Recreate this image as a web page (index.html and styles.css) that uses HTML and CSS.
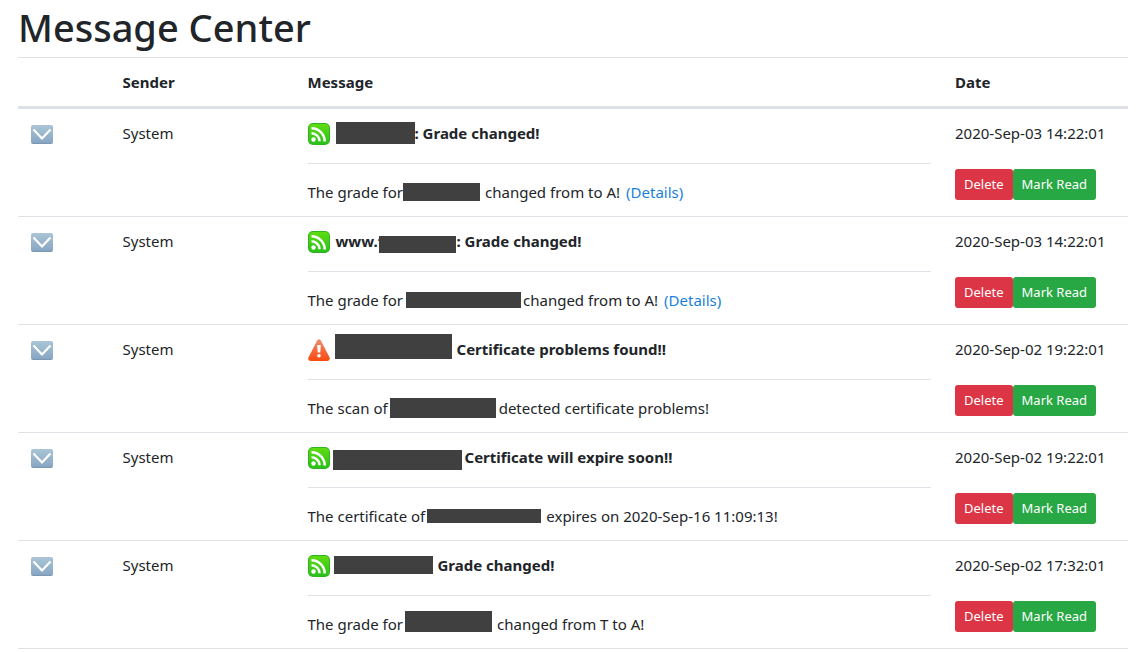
FILE: index.html
```html
<!DOCTYPE html>
<html lang="en">
<head>
  <meta charset="UTF-8" />
  <meta name="viewport" content="width=device-width, initial-scale=1.0" />
  <title>Message Center</title>
  <link rel="stylesheet" href="styles.css">
</head>

<body>
  <!-- shared icons -->
  <svg class="sprite" width="0" height="0" aria-hidden="true">
    <defs>
      <linearGradient id="mailFill" x1="0" y1="0" x2="0" y2="1">
        <stop offset="0" stop-color="#a9c5d6" />
        <stop offset="0.9" stop-color="#8aa8c4" />
        <stop offset="1" stop-color="#7593b2" />
      </linearGradient>
      <linearGradient id="feedFill" x1="0" y1="0" x2="0" y2="1">
        <stop offset="0" stop-color="#5fdc12" />
        <stop offset="1" stop-color="#2bc01c" />
      </linearGradient>
      <linearGradient id="warnFill" x1="0" y1="0" x2="0" y2="1">
        <stop offset="0" stop-color="#f28a6c" />
        <stop offset="1" stop-color="#fb4a10" />
      </linearGradient>
    </defs>
    <symbol id="mail" viewBox="0 0 22 19">
      <rect width="22" height="19" rx="2" fill="url(#mailFill)" />
      <path d="M2.500 4.500L11 13.500L19.500 4.500" fill="none" stroke="#fff" stroke-width="2.200" />
    </symbol>
    <symbol id="feed" viewBox="0 0 22 22">
      <rect width="22" height="22" rx="5" fill="#2fb41f" />
      <rect x="1" y="1" width="20" height="20" rx="4" fill="url(#feedFill)" />
      <circle cx="5.500" cy="16.500" r="2.200" fill="#fff" />
      <path d="M3.500 10.300a8 8 0 0 1 8 8M3.500 5.200a13.200 13.200 0 0 1 13.200 13.200" fill="none" stroke="#fff" stroke-width="2.500" />
    </symbol>
    <symbol id="warn" viewBox="0 0 22 22">
      <path d="M9.200 1.500Q11-1 12.800 1.500L21.600 18.500Q22.500 21.500 19.500 22H2.500Q-.5 21.500.4 18.500z" fill="url(#warnFill)" />
      <path d="M9.200 6h3.600l-.5 7.500h-2.600z" fill="#fff" />
      <circle cx="11" cy="16.700" r="1.800" fill="#fff" />
    </symbol>
  </svg>

  <h1>Message Center</h1>

  <table class="messages">
    <colgroup>
      <col class="col-icon">
      <col class="col-sender">
      <col class="col-message">
      <col class="col-date">
    </colgroup>
    <thead>
      <tr>
        <th></th>
        <th>Sender</th>
        <th>Message</th>
        <th>Date</th>
      </tr>
    </thead>
    <tbody>
      <tr>
        <td><svg class="mail"><use href="#mail" /></svg></td>
        <td>System</td>
        <td>
          <div class="subject"><svg class="icon"><use href="#feed" /></svg><span class="redacted site-1"></span>: Grade changed!</div>
          <hr>
          <div class="text">The grade for<span class="redacted host-1"></span>changed from to A!<a href="#">(Details)</a></div>
        </td>
        <td>
          <div class="date">2020-Sep-03 14:22:01</div>
          <div class="actions"><button class="btn delete">Delete</button><button class="btn read">Mark Read</button></div>
        </td>
      </tr>
      <tr>
        <td><svg class="mail"><use href="#mail" /></svg></td>
        <td>System</td>
        <td>
          <div class="subject"><svg class="icon"><use href="#feed" /></svg>www.f<span class="redacted low site-2"></span>: Grade changed!</div>
          <hr>
          <div class="text">The grade for<span class="redacted host-2"></span>changed from to A!<a href="#">(Details)</a></div>
        </td>
        <td>
          <div class="date">2020-Sep-03 14:22:01</div>
          <div class="actions"><button class="btn delete">Delete</button><button class="btn read">Mark Read</button></div>
        </td>
      </tr>
      <tr>
        <td><svg class="mail"><use href="#mail" /></svg></td>
        <td>System</td>
        <td>
          <div class="subject"><svg class="icon"><use href="#warn" /></svg><span class="redacted high site-3"></span>Certificate problems found!!</div>
          <hr>
          <div class="text">The scan of<span class="redacted host-3"></span>detected certificate problems!</div>
        </td>
        <td>
          <div class="date">2020-Sep-02 19:22:01</div>
          <div class="actions"><button class="btn delete">Delete</button><button class="btn read">Mark Read</button></div>
        </td>
      </tr>
      <tr>
        <td><svg class="mail"><use href="#mail" /></svg></td>
        <td>System</td>
        <td>
          <div class="subject"><svg class="icon"><use href="#feed" /></svg><span class="redacted low site-4"></span>Certificate will expire soon!!</div>
          <hr>
          <div class="text">The certificate of<span class="redacted host-4"></span>expires on 2020-Sep-16 11:09:13!</div>
        </td>
        <td>
          <div class="date">2020-Sep-02 19:22:01</div>
          <div class="actions"><button class="btn delete">Delete</button><button class="btn read">Mark Read</button></div>
        </td>
      </tr>
      <tr>
        <td><svg class="mail"><use href="#mail" /></svg></td>
        <td>System</td>
        <td>
          <div class="subject"><svg class="icon"><use href="#feed" /></svg><span class="redacted site-5"></span>Grade changed!</div>
          <hr>
          <div class="text">The grade for<span class="redacted high host-5"></span>changed from T to A!</div>
        </td>
        <td>
          <div class="date">2020-Sep-02 17:32:01</div>
          <div class="actions"><button class="btn delete">Delete</button><button class="btn read">Mark Read</button></div>
        </td>
      </tr>
    </tbody>
  </table>
</body>
</html>
```
FILE: styles.css
```css
:root {
  --text: #212529;
  --line: #dee2e6;
  --bar: #404040;
}

* {
  box-sizing: border-box;
}

body {
  margin: 0;
  padding: 3px 8px 0 18px;
  font-family: "Segoe UI", "Noto Sans", sans-serif;
  font-size: 15px;
  line-height: 24px;
  color: var(--text);
  background: #fff;
}

.sprite {
  position: absolute;
}

h1 {
  margin: 0 0 6px;
  font-size: 38px;
  font-weight: 500;
  line-height: 48px;
}

.messages {
  width: 100%;
  table-layout: fixed;
  border-collapse: separate;
  border-spacing: 0;
}

.col-icon {
  width: calc(100% / 12);
}

.col-sender,
.col-date {
  width: calc(100% / 6);
}

th,
td {
  padding: 12px;
  text-align: left;
  vertical-align: top;
  border-bottom: 1px solid var(--line);
}

th {
  font-weight: 700;
  border-top: 1px solid var(--line);
  border-bottom-width: 3px;
}

.mail {
  display: block;
  width: 22px;
  height: 19px;
  margin-top: 4px;
  margin-left: 1px;
}

.icon {
  flex: none;
  width: 22px;
  height: 22px;
  margin: 2px 6px 0 0;
}

.subject,
.text {
  display: flex;
  align-items: center;
  height: 24px;
  white-space: nowrap;
}

.subject {
  font-weight: 700;
}

hr {
  height: 1px;
  margin: 18px 0 16px;
  border: 0;
  background: var(--line);
}

a {
  margin-left: 6px;
  color: #1a7fdb;
  text-decoration: none;
}

.date {
  margin-bottom: 24px;
  white-space: nowrap;
}

.actions {
  display: flex;
  height: 31px;
  margin-bottom: -8px;
}

.btn {
  padding: 4px 8px;
  border: 1px solid transparent;
  border-radius: 3px;
  font-family: inherit;
  font-size: 13px;
  line-height: 21px;
  color: #fff;
  white-space: nowrap;
  cursor: pointer;
}

.delete {
  background: #dc3545;
}

.read {
  background: #28a745;
}

/* blanked-out host names */
.redacted {
  flex: none;
  background: var(--bar);
}

.low {
  margin-top: 6px;
}

.high {
  margin-bottom: 6px;
}

.site-1 {
  width: 79px;
  height: 22px;
}

.host-1 {
  width: 77px;
  height: 18px;
  margin-right: 5px;
}

.site-2 {
  width: 77px;
  height: 17px;
  margin-left: -4px;
}

.host-2 {
  width: 115px;
  height: 16px;
  margin-left: 3px;
  margin-right: 2px;
}

.site-3 {
  width: 117px;
  height: 25px;
  margin-left: -1px;
  margin-right: 5px;
}

.host-3 {
  width: 106px;
  height: 20px;
  margin-left: 2px;
  margin-right: 3px;
}

.site-4 {
  width: 129px;
  height: 20px;
  margin-left: -3px;
  margin-right: 3px;
}

.host-4 {
  width: 114px;
  height: 14px;
  margin-left: 2px;
  margin-right: 5px;
}

.site-5 {
  width: 99px;
  height: 18px;
  margin-left: -2px;
  margin-right: 5px;
}

.host-5 {
  width: 87px;
  height: 21px;
  margin-left: 2px;
  margin-right: 5px;
}
```
